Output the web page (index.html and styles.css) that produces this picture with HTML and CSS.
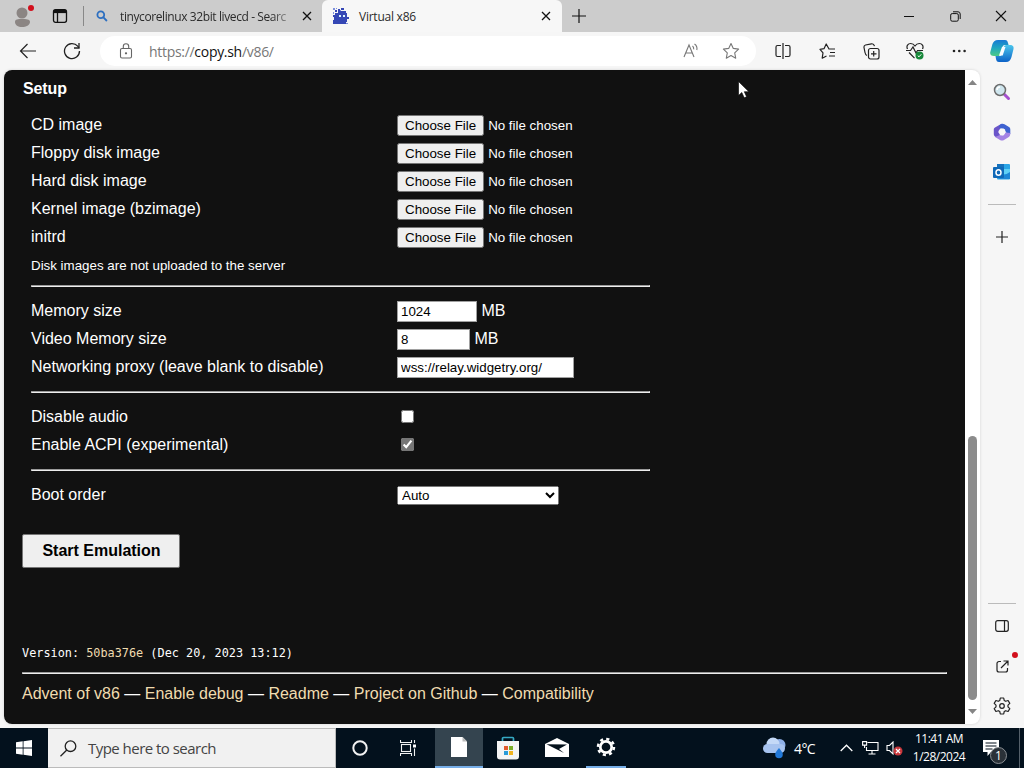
FILE: index.html
```html
<!DOCTYPE html>
<html lang="en">
<head>
    <meta charset="UTF-8">
    <title>Virtual x86</title>
    <link rel="stylesheet" href="styles.css">
</head>
<body>
    <!-- Tabs -->
    <div class="tab-bar">
        <div class="profile">
            <svg width="18" height="20" viewBox="0 0 18 20"><circle cx="8" cy="6" r="5.5" fill="#8b8583"/><path d="M1 15c0-3 3-3 7-3s8 0 8 3c0 3-4 5-8 5s-7-2-7-5z" fill="#8b8583"/></svg>
            <span class="red-dot"></span>
        </div>
        <div class="tab-actions">
            <svg width="16" height="16" viewBox="0 0 16 16" fill="none" stroke="#111" stroke-width="1.3"><rect x="1.5" y="1.7" width="13" height="12.6" rx="2"/><path d="M2 3.5h12" stroke-width="3.2"/><path d="M5.5 4v10"/></svg>
        </div>
        <div class="tab">
            <svg width="12" height="12" viewBox="0 0 12 12" fill="none" stroke="#2d6fc0" stroke-width="1.8"><circle cx="4.8" cy="4.8" r="3.4"/><path d="M7.4 7.4l3.5 3.6"/></svg>
            <span class="tab-title">tinycorelinux 32bit livecd - Searc</span>
            <svg class="tab-close" width="10" height="10" viewBox="0 0 10 10" stroke="#111" stroke-width="1.3"><path d="M1 1l8 8M9 1l-8 8"/></svg>
        </div>
        <div class="tab active">
            <svg width="16" height="16" viewBox="0 0 16 16" shape-rendering="crispEdges"><path fill="#3547b5" d="M2 2h2v2H2zM5 1h2v2H5zM8 0h3v2H8zM5 3h8v2h1v4h2v2h-2v3h-1v2H0v-4h1V9H0V7h2V5h3z"/><path fill="#7e90dd" d="M0 0h2v2H0zM3 0h1v1H3zM0 4h1v2H0zM7 2h1v1H7zM13 15h2v1h-2z"/><path fill="#d8f4ff" d="M6 7h2v2H6zM10 7h2v2h-2z"/></svg>
            <span class="tab-title">Virtual x86</span>
            <svg class="tab-close" width="10" height="10" viewBox="0 0 10 10" stroke="#111" stroke-width="1.3"><path d="M1 1l8 8M9 1l-8 8"/></svg>
        </div>
        <div class="new-tab">
            <svg width="14" height="14" viewBox="0 0 14 14" stroke="#111" stroke-width="1.2"><path d="M7 0v14M0 7h14"/></svg>
        </div>
        <div class="window-buttons">
            <span><svg width="10" height="10" viewBox="0 0 10 10" stroke="#111"><path d="M0 5.5h10"/></svg></span>
            <span><svg width="11" height="11" viewBox="0 0 11 11" fill="none" stroke="#111"><rect x=".7" y="2.6" width="7.6" height="7.6" rx="1.5"/><path d="M3 .8h5a2.2 2.2 0 0 1 2.2 2.2v5"/></svg></span>
            <span><svg width="12" height="12" viewBox="0 0 12 12" stroke="#111" stroke-width="1.1"><path d="M1 1l10 10M11 1L1 11"/></svg></span>
        </div>
    </div>

    <!-- Toolbar -->
    <div class="toolbar">
        <span class="tool back"><svg width="18" height="16" viewBox="0 0 18 16" fill="none" stroke="#222" stroke-width="1.2"><path d="M17 8H1.5M8.5 1L1.5 8l7 7"/></svg></span>
        <span class="tool reload"><svg width="18" height="18" viewBox="0 0 18 18" fill="none" stroke="#222" stroke-width="1.3"><path d="M16.5 9A7.5 7.5 0 1 1 14.7 4.2L16 5.8"/><path d="M16 1v5h-5"/></svg></span>
        <div class="address-bar">
            <svg class="lock" width="14" height="16" viewBox="0 0 14 16" fill="none" stroke="#666" stroke-width="1.1"><rect x="1.5" y="5.5" width="11" height="9.5" rx="1.5"/><path d="M4.3 5.5V3.4a2.7 2.7 0 0 1 5.4 0v2.1"/><circle cx="7" cy="10.3" r=".6" fill="#555"/></svg>
            <span class="url">https://<b>copy.sh</b>/v86/</span>
            <svg class="read" width="16" height="16" viewBox="0 0 16 16" fill="none" stroke="#777" stroke-width="1.1"><path d="M1 14L6 2l5 12M2.8 10h6.4M9.5 3c1 .8 1.4 2 1.2 3.4M11.5 1c2 1.4 2.8 4 2.3 6"/></svg>
            <svg class="star" width="18" height="18" viewBox="0 0 18 18" fill="none" stroke="#777" stroke-width="1.1" stroke-linejoin="round"><path d="M9 1.5l2.3 4.9 5.3.7-3.9 3.7 1 5.4L9 13.6l-4.7 2.6 1-5.4L1.4 7.1l5.3-.7z"/></svg>
        </div>
        <span class="tool"><svg width="16" height="16" viewBox="0 0 16 16" fill="none" stroke="#222" stroke-width="1.2"><path d="M8 0v16M6 2.5H2.5A1.5 1.5 0 0 0 1 4v8a1.5 1.5 0 0 0 1.5 1.5H6M10 2.5h3.5A1.5 1.5 0 0 1 15 4v8a1.5 1.5 0 0 1-1.5 1.5H10"/></svg></span>
        <span class="tool"><svg width="17" height="17" viewBox="0 0 17 17" fill="none" stroke="#222" stroke-width="1.2" stroke-linejoin="round"><path d="M10 6L7.2 1 5 5.7l-4 .6 3 3.5-.8 5.4L7.5 13M9.5 6H16M11 9.5h5M10 13h6"/></svg></span>
        <span class="tool"><svg width="17" height="17" viewBox="0 0 17 17" fill="none" stroke="#222" stroke-width="1.2"><rect x="5.5" y="5.5" width="10.5" height="10.5" rx="2"/><path d="M10.7 8v5.6M8 10.8h5.5M4 12.5C2.5 12 2.3 11 2 9.5L1 4.5C.8 3 1.5 2.3 2.5 2l6-1.2c1.5-.2 2.5.5 3 2.4"/></svg></span>
        <span class="tool"><svg width="18" height="18" viewBox="0 0 18 18" fill="none" stroke="#222" stroke-width="1.2"><path d="M1.5 7C0 4 2 1.5 4.7 1.500 7 1.500 8 2.500 9 4c1-1.500 2-2.500 4.300-2.500C16 1.500 18 4 16.500 7M3 10.500l5.500 5.700M0 8.500h4.500L7 5l3 6 1.500-2.500H17"/><circle cx="13.500" cy="13.500" r="4" fill="#17883a" stroke="none"/><path d="M11.800 13.700l1.200 1.100 2.300-2.500" stroke="#fff" stroke-width="1"/></svg></span>
        <span class="tool"><svg width="14" height="4" viewBox="0 0 14 4" fill="#222"><circle cx="2" cy="2" r="1.3"/><circle cx="7.3" cy="2" r="1.3"/><circle cx="12.6" cy="2" r="1.3"/></svg></span>
        <span class="tool copilot">
            <svg width="24" height="22" viewBox="0 0 24 22">
                <defs>
                    <linearGradient id="cpA" x1="0" y1="0" x2="0" y2="1"><stop offset="0" stop-color="#1779d4"/><stop offset=".5" stop-color="#1fa6c0"/><stop offset="1" stop-color="#4ccb86"/></linearGradient>
                    <linearGradient id="cpB" x1="0" y1="0" x2="0" y2="1"><stop offset="0" stop-color="#4bc6ec"/><stop offset="1" stop-color="#0c62c7"/></linearGradient>
                </defs>
                <path fill="url(#cpB)" d="M17 5h3c3 0 4 2 3.5 4l-2 8c-.8 3-2.500 5-5.500 5H9c-2 0-2.500-1-3-3l-.5-3H10c1 0 1.500-.8 2-2l2-7c.4-1.400 1.400-2 3-2z"/>
                <path fill="url(#cpA)" d="M8 0h7c2 0 2.500 1 3 3l.6 2H15c-1.500 0-2.200.8-2.600 2l-2 7c-.5 1.500-1 2-2.400 2H4c-3 0-4.300-1.500-3.700-4l2-7.500C3 2 5 0 8 0z"/>
                <path fill="#f7fbff" d="M12 7h3.500l-2.800 8.500H9z"/>
            </svg>
        </span>
    </div>

    <div class="browser-body">
        <div class="view">
            <div class="page">
                <h4>Setup</h4>
                <div class="options">
                    <div class="row"><label for="cd">CD image</label><input type="file" id="cd"></div>
                    <div class="row"><label for="fd">Floppy disk image</label><input type="file" id="fd"></div>
                    <div class="row"><label for="hd">Hard disk image</label><input type="file" id="hd"></div>
                    <div class="row"><label for="bz">Kernel image (bzimage)</label><input type="file" id="bz"></div>
                    <div class="row"><label for="initrd">initrd</label><input type="file" id="initrd"></div>
                    <div class="row"><small>Disk images are not uploaded to the server</small></div>
                    <hr class="after-note">
                    <div class="row"><label for="memory">Memory size</label><div><input type="text" class="memory" id="memory" value="1024"> MB</div></div>
                    <div class="row"><label for="vga">Video Memory size</label><div><input type="text" class="vga" id="vga" value="8"> MB</div></div>
                    <div class="row"><label for="proxy">Networking proxy (leave blank to disable)</label><div><input type="text" class="proxy" id="proxy" value="wss://relay.widgetry.org/"></div></div>
                    <hr>
                    <div class="row"><label for="audio">Disable audio</label><input type="checkbox" id="audio"></div>
                    <div class="row"><label for="acpi">Enable ACPI (experimental)</label><input type="checkbox" id="acpi" checked></div>
                    <hr>
                    <div class="row"><label for="boot">Boot order</label><select id="boot"><option>Auto</option></select></div>
                </div>
                <button class="start">Start Emulation</button>
                <div class="version">Version: <a>50ba376e</a> (Dec 20, 2023 13:12)</div>
                <hr class="footer-line">
                <div class="links"><a>Advent of v86</a> — <a>Enable debug</a> — <a>Readme</a> — <a>Project on Github</a> — <a>Compatibility</a></div>
            </div>
            <div class="scrollbar">
                <svg width="9" height="5" viewBox="0 0 9 5"><path d="M4.500 0L9 5H0z" fill="#858585"/></svg>
                <div class="thumb"></div>
                <svg width="9" height="5" viewBox="0 0 9 5"><path d="M4.500 5L9 0H0z" fill="#858585"/></svg>
            </div>
        </div>

        <!-- Edge sidebar -->
        <div class="sidebar">
            <span class="side"><svg width="18" height="18" viewBox="0 0 18 18"><path d="M10.500 10.500l5 5" stroke="#a551cf" stroke-width="3" stroke-linecap="round"/><circle cx="7" cy="7" r="5.500" fill="#cfe6ee" stroke="#6d6d6d" stroke-width="1.500"/><path d="M4 7a3 3 0 0 1 3-3" stroke="#fff" stroke-width="1.500" fill="none"/></svg></span>
            <span class="side">
                <svg width="18" height="18" viewBox="0 0 18 18">
                    <path fill="#6b55c9" d="M8 1L2 4.500C1 5 .8 6 .8 7v4c0 1.500.7 2.300 2 3l3.500 1 1-5L5.500 8 8 5z"/>
                    <path fill="#3e62d0" d="M8 1c1.500-.7 2.500-.3 3.500.3L16 4c1 .6 1.300 1.300 1.300 2.500V11l-4.800-1.500-.5-3.300L7 5.500 6 3z"/>
                    <path fill="#a483e4" d="M17.300 10c0 2-.3 3.200-1.500 4L11 17c-1.300.7-2.700.7-4 0l-5-3 5-2 3 .5 2.500-3z"/>
                    <path fill="#f7f7f7" d="M7.500 5.500h3.200L12.800 9l-2 3.300H7.200L5.200 9z"/>
                </svg>
            </span>
            <span class="side">
                <svg width="18" height="16" viewBox="0 0 18 16">
                    <rect x="4" y="0" width="13" height="15.500" rx="1" fill="#2aa5e6"/><path d="M4 0h7v5H4z" fill="#1571bd"/><path d="M11 5h6v5h-6z" fill="#5fd0f5"/><path d="M5 15l12-7v7z" fill="#1d87d6"/>
                    <rect x="0" y="3" width="11" height="11" rx="1" fill="#0f69b8"/><ellipse cx="5.500" cy="8.500" rx="2.500" ry="2.800" fill="none" stroke="#fff" stroke-width="1.500"/>
                </svg>
            </span>
            <div class="side-line"></div>
            <span class="side"><svg width="14" height="14" viewBox="0 0 14 14" stroke="#222" stroke-width="1.2"><path d="M7 1v12M1 7h12"/></svg></span>
            <div class="side-line bottom"></div>
            <span class="side"><svg width="14" height="12" viewBox="0 0 14 12" fill="none" stroke="#222" stroke-width="1.2"><rect x=".7" y=".7" width="12.6" height="10.6" rx="2"/><path d="M9.500 1v10"/></svg></span>
            <span class="side share"><svg width="13" height="13" viewBox="0 0 13 13" fill="none" stroke="#222" stroke-width="1.2"><path d="M5 1.500H3a2 2 0 0 0-2 2V10a2 2 0 0 0 2 2h6.500a2 2 0 0 0 2-2V8M7.500 1H12v4.500M12 1L5 8"/></svg><i class="red-dot"></i></span>
            <span class="side"><svg width="18" height="18" viewBox="0 0 18 18" fill="none" stroke="#222" stroke-width="1.2" stroke-linejoin="round"><path d="M7.300 1h3.400l.5 2.400 1.500.9 2.400-.8L16.800 6.400 15 8.100v1.800l1.800 1.700-1.700 2.900-2.400-.8-1.500.9-.5 2.400H7.300l-.5-2.400-1.500-.9-2.400.8-1.700-2.900L3 9.900V8.100L1.200 6.400l1.700-2.900 2.400.8 1.500-.9z"/><circle cx="9" cy="9" r="2.300"/></svg></span>
        </div>
    </div>

    <!-- Windows taskbar -->
    <div class="taskbar">
        <span class="start-menu"><svg width="16" height="16" viewBox="0 0 16 16" fill="#fff"><path d="M0 2.300L6.700 1.300v6.200H0zM7.500 1.200L16 0v7.500H7.500zM0 8.400h6.700v6.300L0 13.700zM7.500 8.400H16V16l-8.500-1.200z"/></svg></span>
        <div class="search-box">
            <svg width="17" height="17" viewBox="0 0 17 17" fill="none" stroke="#222" stroke-width="1.3"><circle cx="10.500" cy="6.200" r="5.300"/><path d="M6.800 10L.5 16.300"/></svg>
            <span>Type here to search</span>
        </div>
        <span class="task"><svg width="16" height="16" viewBox="0 0 16 16"><circle cx="8" cy="8" r="6.700" fill="none" stroke="#f2f2f2" stroke-width="2"/></svg></span>
        <span class="task task-view"><svg width="16" height="16" viewBox="0 0 16 16" fill="none" stroke="#f2f2f2" stroke-width="1.1"><rect x="1.500" y="4.500" width="9" height="7"/><path d="M.5 0v2.500h11V0M.5 16v-2.500h11V16M14.500 0v3M14.500 8.500V16"/><path d="M13 4.500h3v3h-3z" fill="#fff" stroke="none"/></svg></span>
        <span class="task current"><svg width="16" height="20" viewBox="0 0 16 20"><path d="M0 0h11.500L16 4.500V20H0z" fill="#fff"/><path d="M11.500 0v4.500H16" fill="#bbb"/></svg></span>
        <span class="task"><svg width="24" height="24" viewBox="0 0 24 24"><path d="M6.500 6V2.500a1 1 0 0 1 1-1h9a1 1 0 0 1 1 1V6" fill="none" stroke="#35a9c4" stroke-width="1.7"/><path d="M1 5h22v15.500a3 3 0 0 1-3 3H4a3 3 0 0 1-3-3z" fill="#f4f4f4"/><path d="M8 10h4v4H8z" fill="#e25a2b"/><path d="M13 10h4v4h-4z" fill="#7aae28"/><path d="M8 15h4v4H8z" fill="#2a9bd8"/><path d="M13 15h4v4h-4z" fill="#f2b41e"/></svg></span>
        <span class="task"><svg width="24" height="20" viewBox="0 0 24 20"><path d="M0 6L12 0l12 6v13H0z" fill="#fff"/><path d="M1.500 6.300L22 6.500l-8 4.500 5 4z" fill="#04111c"/></svg></span>
        <span class="task open"><svg width="20" height="20" viewBox="0 0 20 20"><circle cx="10" cy="10" r="8" fill="none" stroke="#fff" stroke-width="2.5" stroke-dasharray="3.14 3.14"/><circle cx="10" cy="10" r="5.700" fill="none" stroke="#fff" stroke-width="2.7"/></svg></span>
        <div class="tray">
            <svg width="25" height="22" viewBox="0 0 25 22"><circle cx="17.500" cy="8" r="6" fill="#8fb0e8"/><circle cx="11" cy="7" r="6.500" fill="#c4d9f7"/><rect x="1" y="7" width="22" height="9" rx="4.500" fill="#a7c3ef"/><path d="M17 11c2.500 3 3.800 4.500 3.800 6.500a3.800 3.800 0 0 1-7.600 0C13.200 15.500 14.500 14 17 11z" fill="#2178d8"/></svg>
            <span class="temp">4°C</span>
            <svg class="chevron" width="13" height="8" viewBox="0 0 13 8" fill="none" stroke="#fff" stroke-width="1.3"><path d="M.7 7l5.800-5.800L12.300 7"/></svg>
            <svg class="network" width="17" height="14" viewBox="0 0 17 14" fill="none" stroke="#fff" stroke-width="1.1"><path d="M5.500 1.500h10.500v8H4.500V6M10 9.500V13M6.500 13h7M.6.6h4v3.500h-4zM2.600 4v3"/></svg>
            <svg class="sound" width="17" height="15" viewBox="0 0 17 15"><path d="M1 4.500h2.500L7 1v12L3.500 9.500H1z" fill="none" stroke="#fff" stroke-width="1.1"/><circle cx="12" cy="10" r="4.500" fill="#c9373c"/><path d="M10 8l4 4M14 8l-4 4" stroke="#fff" stroke-width="1.2"/></svg>
            <div class="clock"><div>11:41 AM</div><div>1/28/2024</div></div>
            <div class="notify">
                <svg width="16" height="16" viewBox="0 0 16 16"><path d="M0 0h16v12H8l-3.500 4v-4H0z" fill="#fff"/><path d="M2.500 3h11M2.500 6h11M2.500 9h7" stroke="#04111c" stroke-width="1.1"/></svg>
                <span class="count">1</span>
            </div>
        </div>
    </div>

    <svg class="cursor" width="12" height="19" viewBox="0 0 12 19"><path d="M.5.500v14l3.300-3 2.400 5.300 2.400-1L6.300 10.700h4.600z" fill="#fff" stroke="#000" stroke-width=".6"/></svg>
</body>
</html>
```
FILE: styles.css
```css
* {
    box-sizing: border-box;
}
body {
    margin: 0;
    width: 1024px;
    height: 768px;
    overflow: hidden;
    display: flex;
    flex-direction: column;
    background-color: #f6f6f6;
    font-family: 'Open Sans', 'Noto Sans', sans-serif;
    font-size: 12px;
}
svg {
    display: block;
    flex: none;
}
.red-dot {
    position: absolute;
    width: 6px;
    height: 6px;
    border-radius: 50%;
    background-color: #d20f1c;
}

/* tabs */
.tab-bar {
    display: flex;
    align-items: center;
    height: 32px;
    flex: none;
    background-color: #cccccc;
}
.profile {
    position: relative;
    width: 46px;
    padding: 2px 0 0 14px;
}
.profile .red-dot {
    left: 28px;
    top: 0;
}
.tab-actions {
    width: 38px;
    height: 20px;
    padding: 2px 0 0 6px;
    border-right: 1px solid #888;
}
.tab {
    display: flex;
    align-items: center;
    width: 238px;
    height: 32px;
    padding: 0 10px 0 12px;
    color: #2b2b2b;
}
.tab-title {
    flex: 1;
    white-space: nowrap;
    margin-left: 12px;
    letter-spacing: -0.24px;
}
.tab:not(.active) .tab-title {
    flex: none;
    width: 172px;
    margin-right: 10px;
    letter-spacing: -0.4px;
    -webkit-mask-image: linear-gradient(to right, #000 88%, rgba(0, 0, 0, 0.2));
    mask-image: linear-gradient(to right, #000 88%, rgba(0, 0, 0, 0.2));
}
.tab.active {
    width: 240px;
    background-color: #f7f7f7;
    border-radius: 6px 6px 0 0;
    padding: 0 11px;
}
.tab.active .tab-title {
    margin-left: 10px;
}
.new-tab {
    padding-left: 10px;
}
.window-buttons {
    display: flex;
    margin-left: auto;
}
.window-buttons span {
    display: flex;
    justify-content: center;
    align-items: center;
    width: 46px;
}

/* toolbar */
.toolbar {
    display: flex;
    height: 38px;
    flex: none;
    background-color: #f6f6f6;
}
.tool {
    display: flex;
    align-items: center;
    justify-content: center;
    flex: none;
    width: 44px;
}
.tool.back {
    width: 56px;
}
.tool.reload {
    width: 32px;
    margin-right: 12px;
}
.tool.copilot {
    width: 42px;
}
.address-bar {
    display: flex;
    align-items: center;
    flex: none;
    width: 656px;
    height: 30px;
    margin: 4px 5px 4px 0;
    padding: 0 16px 0 19px;
    border-radius: 15px;
    background-color: #fff;
}
.url {
    flex: 1;
    margin-left: 16px;
    font-size: 14px;
    letter-spacing: -0.3px;
    color: #777;
}
.url b {
    font-weight: normal;
    color: #111;
}
.star {
    margin-left: 23px;
}

.browser-body {
    display: flex;
    height: 658px;
    flex: none;
}
.view {
    display: flex;
    width: 976px;
    height: 654px;
    margin-left: 4px;
    border-radius: 8px;
    overflow: hidden;
    background-color: #fff;
    box-shadow: 0 0 3px rgba(0, 0, 0, 0.15);
}

/* v86 page */
.page {
    width: 961px;
    padding: 10px 18px 0;
    background-color: #111;
    color: #fff;
    font-family: 'Liberation Sans', Arial, sans-serif;
    font-size: 16px;
}
h4 {
    margin: 0 0 0 1px;
    font-size: 16px;
    line-height: 18px;
    letter-spacing: -0.1px;
}
.options {
    width: 619px;
    margin: 13px 0 0 9px;
}
.row {
    display: grid;
    grid-template-columns: 366px 1fr;
    align-items: center;
    height: 28px;
    white-space: nowrap;
}
small {
    font-size: 13.333px;
}
hr {
    margin: 10px 0;
    border: 1px inset #eee;
}
hr.after-note {
    margin: 6px 0 10px;
}
input, select {
    margin: 0;
    font-family: 'Liberation Sans', Arial, sans-serif;
    font-size: 13.333px;
}
input[type="text"] {
    height: 21px;
    padding: 1px 3px;
    border: 1px solid #a0a0a0;
    background-color: #fff;
}
.memory {
    width: 80px;
}
.vga {
    width: 73px;
}
.proxy {
    width: 177px;
}
input[type="checkbox"] {
    width: 13px;
    height: 13px;
    margin: 0 0 2px 4px;
    accent-color: #767676;
}
select {
    width: 162px;
    height: 19px;
}
.start {
    display: block;
    width: 158px;
    height: 34px;
    margin-top: 25px;
    padding: 0 0 0 1px;
    border: 1px solid #767676;
    border-radius: 2px;
    background-color: #efefef;
    color: #000;
    font: bold 16px 'Liberation Sans', Arial, sans-serif;
}
.version {
    margin-top: 77px;
    font-family: 'DejaVu Sans Mono', monospace;
    font-size: 11.85px;
    line-height: 16px;
}
.page a {
    color: #f0dcb0;
}
hr.footer-line {
    margin: 11px 0;
}
.links {
    line-height: 18px;
}

.scrollbar {
    display: flex;
    flex-direction: column;
    align-items: center;
    width: 15px;
    padding: 10px 0;
}
.thumb {
    flex: none;
    width: 9px;
    height: 264px;
    margin: 351px 0 9px;
    border-radius: 5px;
    background-color: #8b8b8b;
}

/* sidebar */
.sidebar {
    display: flex;
    flex-direction: column;
    align-items: center;
    width: 44px;
    padding-top: 2px;
}
.side {
    position: relative;
    display: flex;
    align-items: center;
    justify-content: center;
    width: 44px;
    height: 40px;
}
.side-line {
    width: 28px;
    height: 1px;
    margin: 12px 0;
    background-color: #bbb;
}
.side-line.bottom {
    margin: auto 0 2px;
}
.share .red-dot {
    left: 32px;
    top: 6px;
}
.sidebar .side:last-child {
    margin-bottom: 2px;
}

/* taskbar */
.taskbar {
    display: flex;
    height: 40px;
    flex: none;
    background-color: #03111d;
    color: #fff;
}
.start-menu {
    display: flex;
    align-items: center;
    justify-content: center;
    width: 48px;
}
.search-box {
    display: flex;
    align-items: center;
    width: 288px;
    padding-left: 12px;
    background-color: #f1f1f1;
    border: 1px solid #bbb;
    border-left: none;
    color: #444;
    font-size: 15px;
}
.search-box span {
    margin-left: 11px;
    letter-spacing: -0.53px;
}
.task {
    display: flex;
    align-items: center;
    justify-content: center;
    width: 48px;
    margin-right: 1px;
}
.task.task-view {
    padding-right: 2px;
}
.task.current {
    margin-left: 1px;
    background-color: #34444f;
    border-bottom: 2px solid #76aee8;
}
.task.open {
    width: 40px;
    margin-left: 4px;
    border-bottom: 2px solid #76aee8;
}
.tray {
    display: flex;
    align-items: center;
    width: 262px;
    margin-left: auto;
}
.temp {
    width: 26px;
    margin-left: 7px;
    font-size: 14px;
    letter-spacing: -0.6px;
}
.chevron {
    margin-left: 20px;
}
.network {
    margin-left: 9px;
}
.sound {
    margin-left: 7px;
}
.clock {
    width: 60px;
    margin-left: 6px;
    font-size: 12px;
    line-height: 18px;
    text-align: center;
    letter-spacing: -0.5px;
    white-space: nowrap;
}
.notify {
    position: relative;
    flex: 1;
    height: 40px;
    padding: 12px 0 0 14px;
    margin-right: 4px;
    border-right: 1px solid #55606a;
}
.count {
    position: absolute;
    left: 21px;
    top: 19px;
    width: 17px;
    height: 17px;
    border: 1px solid #8a8f94;
    border-radius: 50%;
    background-color: #2a3138;
    font-size: 12px;
    line-height: 15px;
    text-align: center;
}
.cursor {
    position: absolute;
    left: 738px;
    top: 81px;
}
```
